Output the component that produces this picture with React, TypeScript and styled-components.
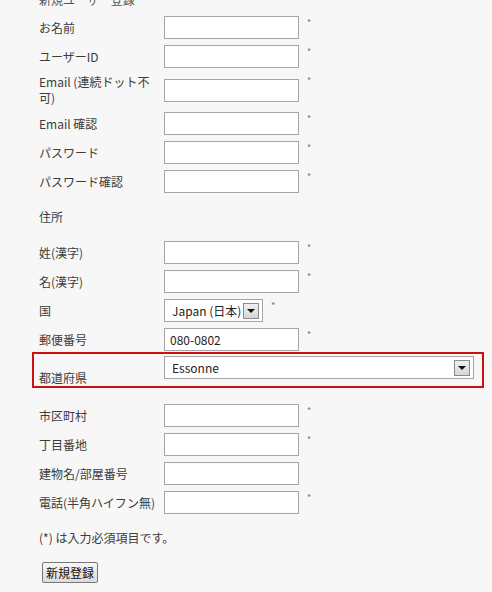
import React from 'react';
import styled, { createGlobalStyle } from 'styled-components';

const GlobalStyle = createGlobalStyle`
  html, body {
    margin: 0;
    padding: 0;
    background-color: #f7f7f7;
  }
  body {
    font-family: "Noto Sans CJK JP", "DejaVu Sans", sans-serif;
    font-size: 12px;
    color: #3c3c3c;
  }
`;

type Field = {
  label: string;
  value?: string;
  required?: boolean;
};

const accountFields: Field[] = [
  { label: 'お名前', required: true },
  { label: 'ユーザーID', required: true },
  { label: 'Email (連続ドット不可)', required: true },
  { label: 'Email 確認', required: true },
  { label: 'パスワード', required: true },
  { label: 'パスワード確認', required: true },
];

const nameFields: Field[] = [
  { label: '姓(漢字)', required: true },
  { label: '名(漢字)', required: true },
];

const addressFields: Field[] = [
  { label: '市区町村', required: true },
  { label: '丁目番地', required: true },
  { label: '建物名/部屋番号' },
  { label: '電話(半角ハイフン無)', required: true },
];

const App = () => {
  const renderRow = (f: Field) => (
    <Row key={f.label}>
      <Label>{f.label}</Label>
      <TextInput type='text' defaultValue={f.value} />
      {f.required && <Required>*</Required>}
    </Row>
  );

  return (
    <>
      <GlobalStyle />
      <Page>
        <Title>新規ユーザー登録</Title>
        {accountFields.map(renderRow)}
        <Section>住所</Section>
        {nameFields.map(renderRow)}
        <Row>
          <Label>国</Label>
          <SelectBox $width={99}>
            <SelectText>Japan (日本)</SelectText>
            <ArrowButton />
          </SelectBox>
          <Required>*</Required>
        </Row>
        <Row>
          <Label>郵便番号</Label>
          <TextInput type='text' defaultValue='080-0802' />
          <Required>*</Required>
        </Row>
        <HighlightRow>
          <BottomLabel>都道府県</BottomLabel>
          <SelectBox $width={310}>
            <SelectText>Essonne</SelectText>
            <ArrowButton />
          </SelectBox>
        </HighlightRow>
        {addressFields.map(renderRow)}
        <Note>(*) は入力必須項目です。</Note>
        <SubmitButton type='button'>新規登録</SubmitButton>
      </Page>
    </>
  );
};
export default App;

const Page = styled.form`
  width: 452px;
  padding-left: 32px;
  display: flex;
  flex-direction: column;
  gap: 6px;
`;

const Title = styled.div`
  margin-top: -8px;
  margin-bottom: 2px;
  padding-left: 7px;
  line-height: 16px;
  color: #555;
`;

const Row = styled.div`
  display: flex;
  align-items: center;
  min-height: 23px;
  padding-left: 7px;
`;

const Label = styled.label`
  width: 118px;
  margin-right: 7px;
  line-height: 16px;
  color: #3c3c3c;
`;

const BottomLabel = styled(Label)`
  align-self: flex-end;
`;

const TextInput = styled.input`
  box-sizing: border-box;
  width: 135px;
  height: 23px;
  margin: 0;
  padding: 2px 5px;
  border: 1px solid #a4a4a4;
  background-color: #ffffff;
  font-family: "Noto Sans CJK JP", "DejaVu Sans", sans-serif;
  font-size: 12px;
  color: #222;
  outline: none;
`;

const Required = styled.span`
  align-self: flex-start;
  margin-left: 8px;
  padding-top: 2px;
  font-size: 9px;
  line-height: 10px;
  color: #777;
`;

const Section = styled.div`
  margin: 10px 0;
  padding-left: 7px;
  line-height: 16px;
`;

const HighlightRow = styled.div`
  display: flex;
  align-items: flex-start;
  height: 30px;
  margin-top: -5px;
  margin-bottom: 10px;
  padding: 2px 8px 0 5px;
  border: 2px solid #cc1111;
`;

const SelectBox = styled.div<{ $width: number }>`
  box-sizing: border-box;
  display: flex;
  align-items: center;
  justify-content: space-between;
  width: ${(p) => p.$width}px;
  height: 23px;
  padding: 0 3px 0 7px;
  border: 1px solid #a4a4a4;
  background-color: #ffffff;
  font-family: "Noto Sans CJK JP", "DejaVu Sans", sans-serif;
  font-size: 12px;
  color: #222;
`;

const SelectText = styled.span`
  white-space: nowrap;
`;

const ArrowButton = styled.span`
  box-sizing: border-box;
  position: relative;
  width: 16px;
  height: 16px;
  border: 1px solid #8a8a8a;
  background: linear-gradient(#f0f0f0, #d6d6d6);
  &::after {
    content: '';
    position: absolute;
    left: 3px;
    top: 5px;
    border-left: 4px solid transparent;
    border-right: 4px solid transparent;
    border-top: 4px solid #111;
  }
`;

const Note = styled.div`
  margin-top: 10px;
  padding-left: 7px;
  line-height: 16px;
`;

const SubmitButton = styled.button`
  align-self: flex-start;
  margin-top: 10px;
  margin-left: 10px;
  width: 56px;
  height: 21px;
  padding: 0;
  border: 1px solid #767676;
  border-radius: 2px;
  background: linear-gradient(#f6f6f6, #dcdcdc);
  font-family: "Noto Sans CJK JP", "DejaVu Sans", sans-serif;
  font-size: 12px;
  color: #111;
`;
